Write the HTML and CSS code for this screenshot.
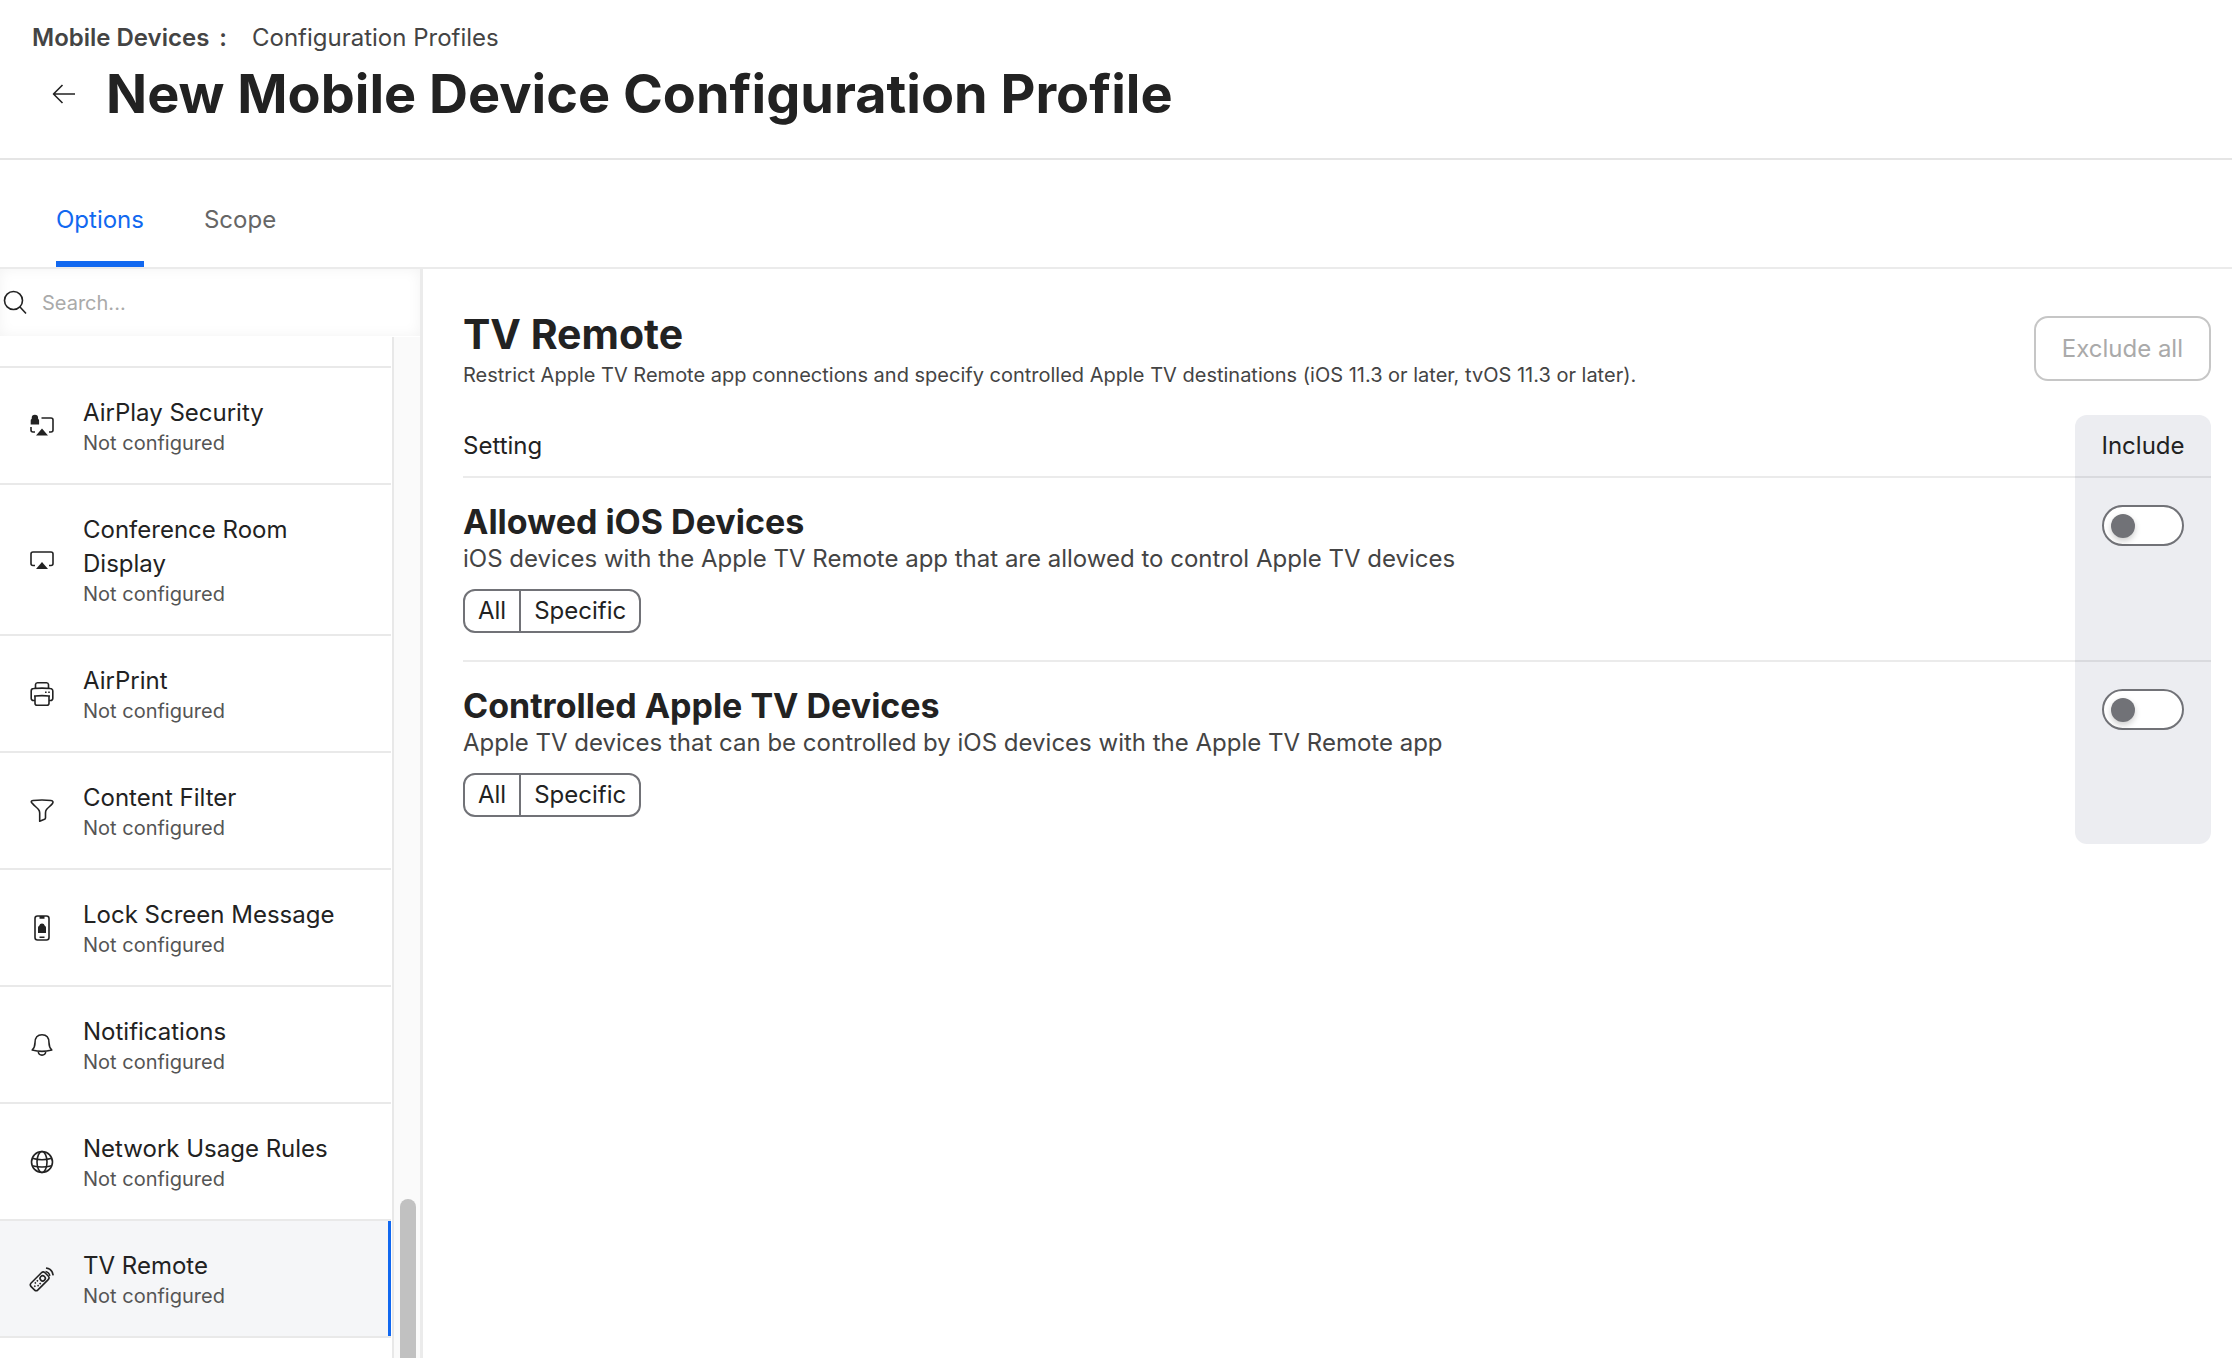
FILE: index.html
```html
<!DOCTYPE html>
<html lang="en">
<head>
    <meta charset="UTF-8">
    <meta name="viewport" content="width=device-width, initial-scale=1.0">
    <title>New Mobile Device Configuration Profile</title>
    <link rel="stylesheet" href="styles.css">
</head>
<body>

    <header class="page-header">
        <nav class="breadcrumb" aria-label="Breadcrumb">
            <a href="#" class="breadcrumb-root">Mobile Devices</a>
            <span class="breadcrumb-separator">:</span>
            <a href="#">Configuration Profiles</a>
        </nav>
        <div class="title-row">
            <button type="button" class="back-button" aria-label="Back">
                <svg class="icon" viewBox="0 0 24 24">
                    <path d="M23 12H1.500M10.500 3L1.500 12l9 9"/>
                </svg>
            </button>
            <h1>New Mobile Device Configuration Profile</h1>
        </div>
    </header>

    <nav class="tabs">
        <a href="#" class="tab active">Options</a>
        <a href="#" class="tab">Scope</a>
    </nav>

    <div class="content">
        <aside class="sidebar">
            <div class="search">
                <label for="search" aria-label="Search payloads">
                    <svg class="icon search-icon" viewBox="0 0 24 24">
                        <circle cx="10.500" cy="9.500" r="9"/>
                        <path d="M17 16l6 6.500"/>
                    </svg>
                </label>
                <input type="text" id="search" placeholder="Search...">
            </div>
            <div class="payload-scroll">
                <ul class="payload-list">
                    <li class="payload-clipped"></li>
                    <li>
                        <a href="#" class="payload">
                            <svg class="icon" viewBox="0 0 24 24">
                                <path d="M11.500 4H21a2 2 0 0 1 2 2v10a2 2 0 0 1-2 2h-2M1 13v3a2 2 0 0 0 2 2h2"/>
                                <path class="fill" d="M12 14.500l6 7H6zM.700 6.500A1.500 1.500 0 0 1 1.700 5V4a3.200 3.200 0 0 1 6.400 0v1a1.500 1.500 0 0 1 1 1.500V10.500H.700z"/>
                            </svg>
                            <span class="payload-text">
                                <span class="payload-name">AirPlay Security</span>
                                <span class="payload-status">Not configured</span>
                            </span>
                        </a>
                    </li>
                    <li>
                        <a href="#" class="payload">
                            <svg class="icon" viewBox="0 0 24 24">
                                <path d="M5 17.500H3a2 2 0 0 1-2-2V6a2 2 0 0 1 2-2h18a2 2 0 0 1 2 2v9.500a2 2 0 0 1-2 2h-2"/>
                                <path class="fill" d="M12 14l6 7H6z"/>
                            </svg>
                            <span class="payload-text">
                                <span class="payload-name">Conference Room Display</span>
                                <span class="payload-status">Not configured</span>
                            </span>
                        </a>
                    </li>
                    <li>
                        <a href="#" class="payload">
                            <svg class="icon" viewBox="0 0 24 24">
                                <path d="M5.500 6V2.500A2 2 0 0 1 7.500.700h9a2 2 0 0 1 2 1.800V6M5 18.500H3.500a2.200 2.200 0 0 1-2.300-2.300V9a2.500 2.500 0 0 1 2.500-2.500q8.300-.8 16.600 0A2.500 2.500 0 0 1 22.800 9v7.200a2.200 2.200 0 0 1-2.300 2.300H19"/>
                                <path d="M5 14q7-.7 14 0v7.300a2 2 0 0 1-2 2H7a2 2 0 0 1-2-2zM4 14h1M19 14h1"/>
                                <path class="fill" d="M15 9.500h1.600v1.600H15zM18.200 9.500h1.600v1.600h-1.600z"/>
                            </svg>
                            <span class="payload-text">
                                <span class="payload-name">AirPrint</span>
                                <span class="payload-status">Not configured</span>
                            </span>
                        </a>
                    </li>
                    <li>
                        <a href="#" class="payload">
                            <svg class="icon" viewBox="0 0 24 24">
                                <path d="M3 1.500q9-1 18 0c2 .2 2.500 1.500 1.500 3-1.500 2.200-4.500 4-6 6-.8 1-1 2-1 3.500v4.700c0 .8-.4 1.300-1 1.600l-4.800 1.900V14c0-1.500-.4-2.500-1.200-3.500-1.500-2-4.500-3.800-6-6C.500 3 1 1.700 3 1.500z"/>
                            </svg>
                            <span class="payload-text">
                                <span class="payload-name">Content Filter</span>
                                <span class="payload-status">Not configured</span>
                            </span>
                        </a>
                    </li>
                    <li>
                        <a href="#" class="payload">
                            <svg class="icon" viewBox="0 0 24 24">
                                <rect x="5" y="0" width="14" height="24" rx="2.500"/>
                                <path class="fill" d="M9.500 0h5v2.700h-5zM9.500 20.500h5V22h-5zM8 11.500a2 2 0 0 1 1.200-1.800 2.900 2.900 0 0 1 5.600 0A2 2 0 0 1 16 11.500V17H8z"/>
                            </svg>
                            <span class="payload-text">
                                <span class="payload-name">Lock Screen Message</span>
                                <span class="payload-status">Not configured</span>
                            </span>
                        </a>
                    </li>
                    <li>
                        <a href="#" class="payload">
                            <svg class="icon" viewBox="0 0 24 24">
                                <path d="M2.200 17C4 15.200 5 13.200 5 9.700c0-5 2.500-8 7-8s7 3 7 8c0 3.500 1 5.500 2.800 7.300Q12 19.700 2.200 17zM8.300 18.700c.2 2.200 1.700 3.400 3.700 3.400s3.500-1.200 3.700-3.400"/>
                            </svg>
                            <span class="payload-text">
                                <span class="payload-name">Notifications</span>
                                <span class="payload-status">Not configured</span>
                            </span>
                        </a>
                    </li>
                    <li>
                        <a href="#" class="payload">
                            <svg class="icon" viewBox="0 0 24 24">
                                <circle cx="12" cy="12" r="10.500"/>
                                <ellipse cx="12" cy="12" rx="5" ry="10.500"/>
                                <path d="M2.300 8.200q9.700 3 19.400 0M2.300 15.800q9.700 2.500 19.400 0"/>
                            </svg>
                            <span class="payload-text">
                                <span class="payload-name">Network Usage Rules</span>
                                <span class="payload-status">Not configured</span>
                            </span>
                        </a>
                    </li>
                    <li>
                        <a href="#" class="payload selected">
                            <svg class="icon" viewBox="0 0 24 24">
                                <g transform="rotate(45 9.500 14.500)">
                                    <rect x="4.700" y="4.500" width="9.600" height="19.500" rx="2.500"/>
                                    <circle cx="9.500" cy="10" r="2.600"/>
                                    <path class="fill" d="M6.800 14.800h1.500v1.500H6.800zM10.700 14.800h1.500v1.500h-1.500zM6.800 17.700h1.500v1.500H6.800zM10.700 17.700h1.500v1.500h-1.500zM8.750 20.300h1.500v1.500h-1.500z"/>
                                </g>
                                <path d="M16 1q6.500 1 7.200 7.300M15.500 4.500q3.700.8 4.300 4.300"/>
                            </svg>
                            <span class="payload-text">
                                <span class="payload-name">TV Remote</span>
                                <span class="payload-status">Not configured</span>
                            </span>
                        </a>
                    </li>
                </ul>
                <div class="scroll-track">
                    <div class="scroll-thumb"></div>
                </div>
            </div>
        </aside>

        <main class="panel">
            <div class="panel-header">
                <div>
                    <h2>TV Remote</h2>
                    <p class="panel-description">Restrict Apple TV Remote app connections and specify controlled Apple TV destinations (iOS 11.3 or later, tvOS 11.3 or later).</p>
                </div>
                <button type="button" class="exclude-button" disabled>Exclude all</button>
            </div>

            <table class="settings">
                <thead>
                    <tr>
                        <th scope="col">Setting</th>
                        <th scope="col" class="include">Include</th>
                    </tr>
                </thead>
                <tbody>
                    <tr>
                        <td>
                            <h3 id="allowed">Allowed iOS Devices</h3>
                            <p>iOS devices with the Apple TV Remote app that are allowed to control Apple TV devices</p>
                            <div class="segmented" role="group" aria-labelledby="allowed">
                                <button type="button">All</button>
                                <button type="button">Specific</button>
                            </div>
                        </td>
                        <td class="include">
                            <input type="checkbox" class="toggle" aria-labelledby="allowed">
                        </td>
                    </tr>
                    <tr>
                        <td>
                            <h3 id="controlled">Controlled Apple TV Devices</h3>
                            <p>Apple TV devices that can be controlled by iOS devices with the Apple TV Remote app</p>
                            <div class="segmented" role="group" aria-labelledby="controlled">
                                <button type="button">All</button>
                                <button type="button">Specific</button>
                            </div>
                        </td>
                        <td class="include">
                            <input type="checkbox" class="toggle" aria-labelledby="controlled">
                        </td>
                    </tr>
                </tbody>
            </table>
        </main>
    </div>

</body>
</html>
```
FILE: styles.css
```css
* {
    box-sizing: border-box;
}

body {
    font-family: Inter, sans-serif;
    font-size: 24px;
    line-height: 34px;
    color: #222222;
    background-color: #ffffff;
    margin: 0;
    height: 100vh;
    display: flex;
    flex-direction: column;
    overflow: hidden;
}

h1, h2, h3, p, ul {
    margin: 0;
    padding: 0;
}

a {
    color: inherit;
    text-decoration: none;
}

button, input {
    font-family: inherit;
    font-size: inherit;
    line-height: inherit;
    color: inherit;
}

.icon {
    width: 24px;
    height: 24px;
    flex-shrink: 0;
    display: block;
    overflow: visible;
    fill: none;
    stroke: #222222;
    stroke-width: 1.6;
    stroke-linejoin: round;
}

.icon .fill {
    fill: #222222;
    stroke: none;
}

/* Header */
.page-header {
    padding: 21px 32px 28px;
    border-bottom: 2px solid #e5e5e5;
}

.breadcrumb {
    display: flex;
    color: #444444;
}

.breadcrumb-root {
    font-weight: 600;
}

.breadcrumb-separator {
    font-weight: 600;
    margin: 0 25px 0 10px;
}

.title-row {
    display: flex;
    align-items: center;
    gap: 30px;
    padding-left: 20px;
    margin-top: 3px;
}

.back-button {
    background: none;
    border: none;
    padding: 0;
    cursor: pointer;
}

h1 {
    font-size: 54px;
    line-height: 72px;
    font-weight: 700;
}

/* Tabs */
.tabs {
    display: flex;
    gap: 60px;
    padding: 0 56px;
    border-bottom: 2px solid #ebebeb;
}

.tab {
    padding: 43px 0 24px;
    border-bottom: 6px solid transparent;
    color: #666666;
}

.tab.active {
    color: #1168f0;
    border-color: #1168f0;
}

/* Sidebar */
.content {
    flex: 1;
    display: flex;
    min-height: 0;
}

.sidebar {
    width: 423px;
    flex-shrink: 0;
    display: flex;
    flex-direction: column;
    border-right: 3px solid #ebebeb;
}

.search {
    display: flex;
    align-items: center;
    gap: 15px;
    height: 67px;
    padding: 0 3px;
    box-shadow: inset 0 0 14px rgba(0, 0, 0, 0.05);
}

.search input {
    flex: 1;
    min-width: 0;
    border: none;
    outline: none;
    padding: 0;
    font-size: 20px;
    background: none;
}

.search input::placeholder {
    color: #aaaaaa;
}

.payload-scroll {
    flex: 1;
    display: flex;
    min-height: 0;
    overflow: hidden;
}

.payload-list {
    flex: 1;
    list-style: none;
}

.payload-list li {
    border-bottom: 2px solid #e9e9e9;
}

.payload-clipped {
    height: 32px;
}

.payload {
    display: flex;
    align-items: center;
    gap: 29px;
    padding: 28px 30px 27px;
}

.payload.selected {
    background-color: #f5f6f8;
    box-shadow: inset -3px 0 #1168f0;
}

.payload-text {
    display: flex;
    flex-direction: column;
}

.payload-status {
    font-size: 20px;
    line-height: 26px;
    color: #555555;
}

.scroll-track {
    display: flex;
    align-items: flex-end;
    width: 28px;
    margin: 1px 0 0 1px;
    padding: 0 4px 0 6px;
    border-left: 2px solid #e8e8e8;
    background-color: #fafafa;
}

.scroll-thumb {
    width: 16px;
    height: 159px;
    border-radius: 8px 8px 0 0;
    background-color: #c1c1c1;
}

/* Settings panel */
.panel {
    flex: 1;
    padding: 37px 21px 0 40px;
}

.panel-header {
    display: flex;
    justify-content: space-between;
    margin-bottom: 27px;
}

h2 {
    font-size: 41px;
    line-height: 56px;
    font-weight: 700;
}

.panel-description {
    font-size: 20px;
    line-height: 26px;
    color: #444444;
}

.exclude-button {
    margin-top: 10px;
    height: 65px;
    padding: 0 26px;
    background: none;
    border: 2px solid #c6c6c6;
    border-radius: 14px;
    color: #aaaaaa;
    white-space: nowrap;
}

.settings {
    width: 100%;
    border-collapse: separate;
    border-spacing: 0;
}

.settings th,
.settings td {
    padding: 0;
    text-align: left;
    font-weight: 400;
    vertical-align: top;
    border-bottom: 2px solid rgba(0, 0, 0, 0.08);
}

.settings th {
    padding: 14px 0 13px;
}

.settings td {
    padding: 24px 0 27px;
}

.settings tbody tr:last-child td {
    border-bottom: none;
}

.settings .include {
    width: 136px;
    text-align: center;
    background-color: #ecedf1;
}

.settings th.include {
    border-radius: 12px 12px 0 0;
}

.settings tbody tr:last-child .include {
    border-radius: 0 0 12px 12px;
}

.settings td.include {
    padding-top: 27px;
}

h3 {
    font-size: 34px;
    line-height: 40px;
    font-weight: 700;
}

.settings p {
    color: #444444;
}

.segmented {
    display: inline-flex;
    vertical-align: top;
    margin-top: 13px;
    border: 2px solid #717277;
    border-radius: 12px;
    overflow: hidden;
}

.segmented button {
    height: 40px;
    padding: 0 13px;
    background: none;
    border: none;
    cursor: pointer;
}

.segmented button + button {
    border-left: 2px solid #717277;
}

.toggle {
    appearance: none;
    display: inline-flex;
    align-items: center;
    vertical-align: top;
    width: 82px;
    height: 41px;
    margin: 0;
    padding: 0 7px;
    background-color: #ffffff;
    border: 2px solid #717277;
    border-radius: 21px;
    cursor: pointer;
}

.toggle::before {
    content: "";
    width: 24px;
    height: 24px;
    border-radius: 50%;
    background-color: #717277;
    box-shadow: 0 3px 6px rgba(0, 0, 0, 0.2);
}

.toggle:checked {
    justify-content: flex-end;
}
```
